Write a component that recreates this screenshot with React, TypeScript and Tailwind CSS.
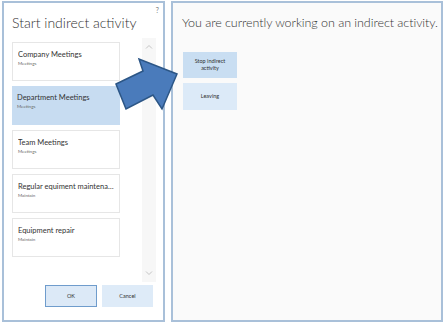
import React from 'react';

const FONT = { fontFamily: 'Lato, "Open Sans", sans-serif' };

const activities = [
  { name: 'Company Meetings', group: 'Meetings' },
  { name: 'Department Meetings', group: 'Meetings', selected: true },
  { name: 'Team Meetings', group: 'Meetings' },
  { name: 'Regular equiment maintenance', group: 'Maintain' },
  { name: 'Equipment repair', group: 'Maintain' },
];

function ActivityCard({ name, group, selected }: { name: string; group: string; selected?: boolean }) {
  return (
    <div
      className={
        'h-[39px] w-[108px] px-[5px] pt-[7px] ' +
        (selected ? 'bg-[#c7dcf1]' : 'border border-[#e6e6e6] bg-white')
      }
    >
      <div className="truncate text-[7.5px] leading-[10px] text-[#333]">{name}</div>
      <div className="mt-[1px] text-[4.5px] leading-[6px] text-[#666]">{group}</div>
    </div>
  );
}

function Chevron({ up }: { up?: boolean }) {
  return (
    <svg width="8" height="5" viewBox="0 0 8 5">
      <path d={up ? 'M1 4.5 L4 1.5 L7 4.5' : 'M1 0.5 L4 3.5 L7 0.5'} fill="none" stroke="#b8b8b8" strokeWidth="0.8" />
    </svg>
  );
}

function Arrow() {
  return (
    <svg className="absolute left-[110px] top-[50px]" width="75" height="65" viewBox="0 0 75 65">
      <polygon
        points="6,34 33,21 29,9 67,24 52,59 43,45 16,59"
        fill="#4a7bbb"
        stroke="#2c5686"
        strokeWidth="1.5"
        strokeLinejoin="miter"
      />
    </svg>
  );
}

export default function App() {
  return (
    <div className="relative flex h-[326px] w-[446px] gap-[6px] bg-white pl-[2px] pt-[1px]" style={FONT}>
      {/* Left dialog */}
      <div className="relative flex h-[321px] w-[163px] flex-col border-2 border-[#a9c0d9] bg-white">
        <span className="absolute right-[4px] top-[2px] text-[7px] text-[#777]">?</span>
        <div className="whitespace-nowrap pl-[8px] pt-[10px] text-[14px] font-light leading-[20px] text-[#333]">
          Start indirect activity
        </div>
        <div className="mt-[5px] flex h-[244px] pl-[8px]">
          <div className="flex flex-col gap-[5px] pt-[4px]">
            {activities.map((a) => (
              <ActivityCard key={a.name} {...a} />
            ))}
          </div>
          <div className="ml-[22px] flex w-[14px] flex-col items-center justify-between bg-[#f7f7f7] py-[6px]">
            <Chevron up />
            <Chevron />
          </div>
        </div>
        <div className="mt-[3px] flex gap-[5px] pl-[41px]">
          <button className="h-[22px] w-[52px] border border-[#6f9ccc] bg-[#dce9f7] text-[5.5px] text-[#333]">
            OK
          </button>
          <button className="h-[22px] w-[51px] bg-[#deebf8] text-[5.5px] text-[#333]">Cancel</button>
        </div>
      </div>

      {/* Right panel */}
      <div className="flex h-[321px] w-[272px] flex-col border-2 border-[#a9c0d9] bg-[#fafafa]">
        <div className="whitespace-nowrap pl-[9px] pt-[10px] text-[12.5px] font-light leading-[20px] tracking-[-0.05px] text-[#333]">
          You are currently working on an indirect activity.
        </div>
        <div className="mt-[19px] flex flex-col gap-[5px] pl-[10px]">
          <button className="flex h-[26px] w-[54px] items-center justify-center bg-[#c9def2] text-center text-[5.5px] leading-[7px] text-[#333]">
            Stop indirect
            <br />
            activity
          </button>
          <button className="h-[27px] w-[54px] bg-[#dceaf8] text-[5.5px] text-[#333]">Leaving</button>
        </div>
      </div>

      <Arrow />
    </div>
  );
}
